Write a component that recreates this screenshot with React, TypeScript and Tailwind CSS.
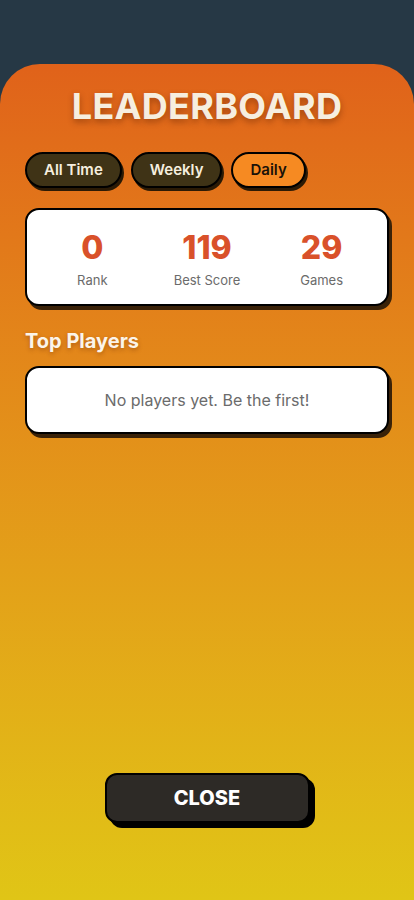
export default function App() {
  const tabs = ['All Time', 'Weekly', 'Daily']
  const active = 'Daily'
  const stats = [
    { value: '0', label: 'Rank' },
    { value: '119', label: 'Best Score' },
    { value: '29', label: 'Games' },
  ]

  return (
    <div className="min-h-[900px] bg-[#263845] pt-16 font-['Inter','Liberation_Sans',sans-serif]">
      <div className="flex h-[836px] flex-col rounded-t-[40px] bg-gradient-to-b from-[#e0621a] to-[#e0c516] px-[25px]">
        <h1 className="mt-[22px] text-center text-[36px] font-bold leading-[40px] tracking-[0.3px] text-[#f6eedf] [text-shadow:0_3px_6px_rgba(90,30,0,0.45)]">
          LEADERBOARD
        </h1>

        <div className="mt-[26px] flex gap-[9px]">
          {tabs.map((tab) => (
            <button
              key={tab}
              className={
                tab === active
                  ? 'h-[36px] rounded-full border-2 border-black bg-[#f68a22] px-[17px] text-[15px] font-semibold text-[#1a1208] shadow-[2px_3px_0_#2b1a05]'
                  : 'h-[36px] rounded-full border-2 border-black bg-[#3f3316] px-[17px] text-[15px] font-semibold text-[#f6eedf] shadow-[2px_3px_0_#2b1a05]'
              }
            >
              {tab}
            </button>
          ))}
        </div>

        <div className="mt-[20px] grid h-[98px] grid-cols-3 items-center rounded-[14px] border-2 border-black bg-white px-2 pt-[6px] shadow-[3px_4px_0_#3a2208]">
          {stats.map((s) => (
            <div key={s.label} className="flex flex-col items-center">
              <span className="text-[32px] font-extrabold leading-[38px] text-[#d9512a]">{s.value}</span>
              <span className="mt-[4px] text-[13px] text-[#6b6b6b]">{s.label}</span>
            </div>
          ))}
        </div>

        <h2 className="mt-[22px] text-[20px] font-bold leading-[26px] text-[#fbf4ea] [text-shadow:0_2px_4px_rgba(90,30,0,0.35)]">
          Top Players
        </h2>

        <div className="mt-[12px] flex h-[68px] items-center justify-center rounded-[14px] border-2 border-black bg-white shadow-[3px_4px_0_#3a2208]">
          <span className="text-[16px] text-[#6b6b6b]">No players yet. Be the first!</span>
        </div>

        <div className="mt-auto mb-[77px] flex justify-center">
          <button className="h-[50px] w-[205px] rounded-[12px] border-2 border-black bg-[#2d2a26] text-[20px] font-extrabold text-white shadow-[5px_5px_0_#000]">
            CLOSE
          </button>
        </div>
      </div>
    </div>
  )
}
